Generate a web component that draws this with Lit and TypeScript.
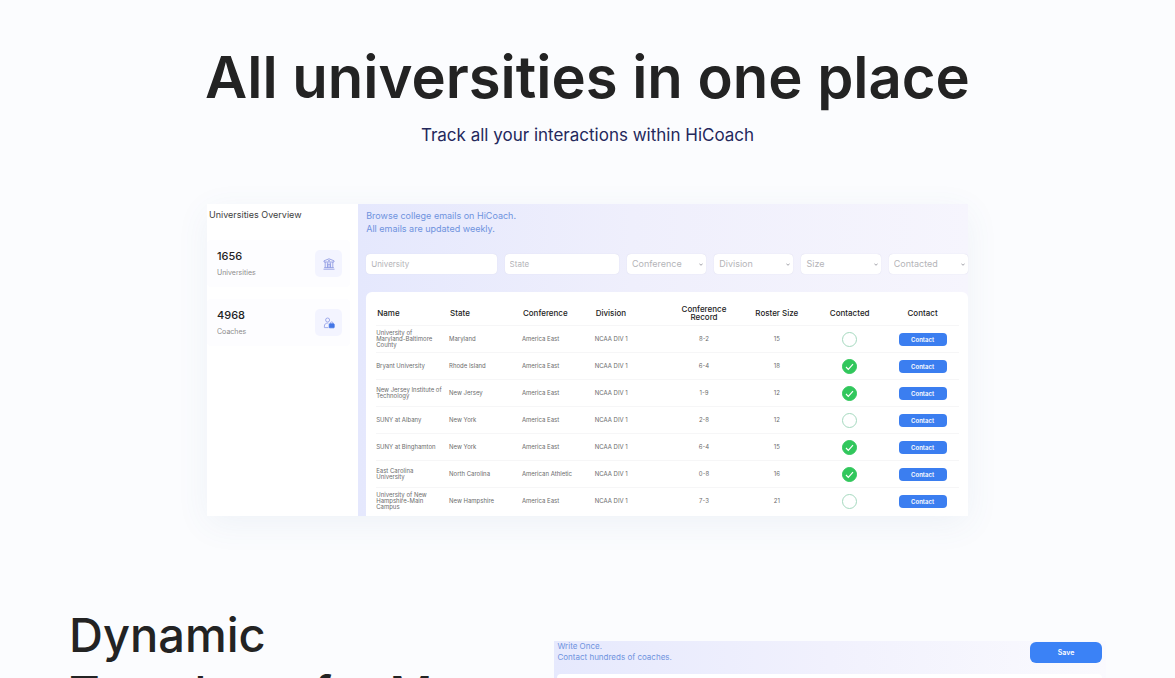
import { LitElement, html, css, svg } from "lit";
import { customElement } from "lit/decorators.js";

interface School {
  name: string[];
  state: string;
  conference: string;
  record: string;
  roster: number;
  contacted: boolean;
}

const SCHOOLS: School[] = [
  { name: ["University of", "Maryland-Baltimore", "County"], state: "Maryland", conference: "America East", record: "8-2", roster: 15, contacted: false },
  { name: ["Bryant University"], state: "Rhode Island", conference: "America East", record: "6-4", roster: 18, contacted: true },
  { name: ["New Jersey Institute of", "Technology"], state: "New Jersey", conference: "America East", record: "1-9", roster: 12, contacted: true },
  { name: ["SUNY at Albany"], state: "New York", conference: "America East", record: "2-8", roster: 12, contacted: false },
  { name: ["SUNY at Binghamton"], state: "New York", conference: "America East", record: "6-4", roster: 15, contacted: true },
  { name: ["East Carolina", "University"], state: "North Carolina", conference: "American Athletic", record: "0-8", roster: 16, contacted: true },
  { name: ["University of New", "Hampshire-Main", "Campus"], state: "New Hampshire", conference: "America East", record: "7-3", roster: 21, contacted: false },
];

const bankIcon = svg`<svg class="icon" viewBox="0 0 12 12" fill="none" stroke="#8793e0" stroke-width="0.8" aria-hidden="true">
  <path d="M1 4V2.8L6 0.8l5 2V4z M2.2 4v5.5 M4.4 4.5v5 M7.6 4.5v5 M9.8 4v5.5 M1.2 9.6h9.6 M0.5 11.2h11"/>
  <path d="M5 9.5V6.2h2v3.3"/><circle cx="6" cy="2.8" r="0.5"/>
</svg>`;

const coachIcon = svg`<svg class="icon" viewBox="0 0 12 12" fill="none" stroke="#8d9be6" stroke-width="0.8" aria-hidden="true">
  <circle cx="4.6" cy="3" r="2"/>
  <path d="M5.4 10.6H1.4V9c0-1.7 1.3-2.9 3-2.9h1"/>
  <path d="M7.4 7V6.2a1.3 1.3 0 0 1 2.6 0V7"/>
  <rect x="6.2" y="6.8" width="5" height="4" rx="0.6" fill="#4376e6" stroke="#4376e6"/>
</svg>`;

@customElement("app-root")
export class AppRoot extends LitElement {
  static styles = css`
    :host {
      display: block;
      height: 100vh;
      overflow: hidden;
      background: #fbfcfe;
      color: #232323;
      font-family: Inter, "Open Sans", sans-serif;
    }
    * { box-sizing: border-box; }
    h1, h2, h3, p { margin: 0; font-weight: 400; }
    button, input, select { font: inherit; margin: 0; border: 0; }
    .hero {
      padding: 43px 24px 0;
      text-align: center;
    }
    .title {
      font-size: 58px;
      line-height: 68px;
      font-weight: 600;
    }
    .subtitle {
      margin-top: 12px;
      font-size: 17px;
      line-height: 24px;
      color: #24285c;
    }
    .preview {
      display: grid;
      grid-template-columns: 151fr 609fr;
      max-width: 761px;
      margin: 57px auto 0;
      background: #fff;
      box-shadow: 0 8px 32px rgba(70, 110, 150, 0.07);
    }
    .side { padding: 4px 8px 0 0; }
    .side-title {
      padding-left: 2px;
      font-size: 9px;
      line-height: 14px;
      color: #3c3c3c;
    }
    .stats {
      display: flex;
      flex-direction: column;
      gap: 12px;
      margin-top: 18px;
    }
    .stat {
      display: flex;
      align-items: center;
      justify-content: space-between;
      height: 47px;
      padding: 0 8px 0 10px;
      border-radius: 4px;
      background: #fdfdff;
    }
    .stat-number {
      font-size: 11px;
      line-height: 16px;
      font-weight: 500;
    }
    .stat-label {
      margin-top: 3px;
      font-size: 7px;
      line-height: 12px;
      color: #8c8c8c;
    }
    .badge {
      display: grid;
      place-items: center;
      width: 27px;
      height: 27px;
      border-radius: 5px;
      background: #f3f4ff;
    }
    .icon { width: 12px; height: 12px; }
    .main {
      padding: 5px 0 0 8px;
      background: linear-gradient(90deg, #e5e8fd, #efeffc 45%, #f6f5fd);
    }
    .note {
      font-size: 9px;
      line-height: 13px;
      color: #6f93de;
    }
    .filters {
      display: grid;
      grid-template-columns: 130fr 114fr repeat(4, 79fr);
      gap: 8px;
      margin-top: 19px;
    }
    .field {
      width: 100%;
      min-width: 0;
      height: 20px;
      padding: 0 5px;
      border-radius: 4px;
      background: #fff;
      box-shadow: 0 0 1px #cfcfe4;
      color: #b4b4b8;
      font-size: 8px;
      line-height: 20px;
      appearance: none;
      outline: 0;
    }
    .field::placeholder { color: #b4b4b8; opacity: 1; }
    .pick { display: grid; align-items: center; }
    .pick > * { grid-area: 1 / 1; }
    .pick .field { font-size: 9px; }
    .chevron {
      justify-self: end;
      width: 4px;
      height: 3px;
      margin-right: 3px;
      pointer-events: none;
    }
    .card {
      margin-top: 18px;
      padding: 8px 9px 2px 10px;
      border-radius: 6px 6px 0 0;
      background: #fff;
    }
    .table {
      width: 100%;
      table-layout: fixed;
      border-collapse: separate;
      border-spacing: 0;
    }
    .table th {
      height: 25px;
      padding: 0 1px;
      font-size: 8px;
      line-height: 8px;
      font-weight: 500;
      text-align: left;
      color: #1c1c1c;
    }
    .table td {
      height: 27px;
      padding: 0;
      border-top: 1px solid #f6f6f7;
      font-size: 6px;
      line-height: 6px;
      color: #6c6c6c;
      white-space: nowrap;
    }
    .table .mid { text-align: center; }
    .check {
      display: inline-grid;
      place-items: center;
      vertical-align: middle;
    }
    .check > * { grid-area: 1 / 1; }
    .box {
      width: 15px;
      height: 15px;
      border: 1px solid #a5d9bf;
      border-radius: 50%;
      background: #fff;
      appearance: none;
    }
    .box:checked { border-color: #31c75c; background: #31c75c; }
    .tick { width: 9px; height: 9px; pointer-events: none; }
    .contact {
      display: inline-block;
      width: 48px;
      height: 13px;
      padding: 0;
      border-radius: 4px;
      background: #3b7ef0;
      color: #fff;
      font-size: 6px;
      line-height: 13px;
      font-weight: 600;
      vertical-align: middle;
    }
    .templates {
      display: grid;
      grid-template-columns: 485fr 551fr;
      align-items: start;
      padding: 90px 69px 0;
    }
    .templates-title {
      font-size: 47px;
      line-height: 58px;
      font-weight: 500;
    }
    .editor {
      margin-top: 35px;
      padding: 0 4px 0 3px;
      background: linear-gradient(90deg, #e6e9fd, #f1f1fd 50%, #fafafe);
    }
    .editor-head {
      display: flex;
      justify-content: space-between;
      height: 33px;
    }
    .editor-note {
      font-size: 8px;
      line-height: 11px;
      color: #6f93de;
    }
    .save {
      width: 72px;
      height: 21px;
      margin-top: 1px;
      border-radius: 6px;
      background: #3b82f6;
      color: #fff;
      font-size: 7px;
      font-weight: 600;
    }
    .sheet { height: 240px; border-radius: 4px 4px 0 0; background: #fff; }
  `;

  private stat(value: number, label: string, icon: unknown) {
    return html`<div class="stat">
      <div>
        <p class="stat-number">${value}</p>
        <p class="stat-label">${label}</p>
      </div>
      <span class="badge">${icon}</span>
    </div>`;
  }

  private pick(label: string) {
    return html`<div class="pick">
      <select class="field" aria-label=${label}><option>${label}</option></select>
      <svg class="chevron" viewBox="0 0 4 3" aria-hidden="true"><path d="M0.4 0.6 2 2.3 3.6 0.6" fill="none" stroke="#9a9aa2" stroke-width="0.9"/></svg>
    </div>`;
  }

  private row(s: School) {
    return html`<tr>
      <td>${s.name.map((line, i) => (i ? html`<br />${line}` : line))}</td>
      <td>${s.state}</td>
      <td>${s.conference}</td>
      <td>NCAA DIV 1</td>
      <td class="mid">${s.record}</td>
      <td class="mid">${s.roster}</td>
      <td class="mid">
        <span class="check">
          <input class="box" type="checkbox" aria-label="Contacted ${s.name.join(" ")}" .checked=${s.contacted} />
          ${s.contacted
            ? html`<svg class="tick" viewBox="0 0 9 9" aria-hidden="true"><path d="M1 5 3.3 7.3 8 2.2" fill="none" stroke="#fff" stroke-width="1.2"/></svg>`
            : ""}
        </span>
      </td>
      <td class="mid"><button class="contact" type="button">Contact</button></td>
    </tr>`;
  }

  render() {
    return html`
      <section class="hero">
        <h1 class="title">All universities in one place</h1>
        <p class="subtitle">Track all your interactions within HiCoach</p>
      </section>
      <section class="preview">
        <aside class="side">
          <h3 class="side-title">Universities Overview</h3>
          <div class="stats">
            ${this.stat(1656, "Universities", bankIcon)}
            ${this.stat(4968, "Coaches", coachIcon)}
          </div>
        </aside>
        <div class="main">
          <p class="note">Browse college emails on HiCoach.<br />All emails are updated weekly.</p>
          <div class="filters">
            <input class="field" type="text" placeholder="University" aria-label="University" />
            <input class="field" type="text" placeholder="State" aria-label="State" />
            ${["Conference", "Division", "Size", "Contacted"].map((l) => this.pick(l))}
          </div>
          <div class="card">
            <table class="table">
              <thead>
                <tr>
                  <th>Name</th>
                  <th>State</th>
                  <th>Conference</th>
                  <th>Division</th>
                  <th class="mid">Conference<br />Record</th>
                  <th class="mid">Roster Size</th>
                  <th class="mid">Contacted</th>
                  <th class="mid">Contact</th>
                </tr>
              </thead>
              <tbody>
                ${SCHOOLS.map((s) => this.row(s))}
              </tbody>
            </table>
          </div>
        </div>
      </section>
      <section class="templates">
        <h2 class="templates-title">Dynamic<br />Templates for Mass</h2>
        <div class="editor">
          <div class="editor-head">
            <p class="editor-note">Write Once.<br />Contact hundreds of coaches.</p>
            <button class="save" type="button">Save</button>
          </div>
          <div class="sheet"></div>
        </div>
      </section>
    `;
  }
}
